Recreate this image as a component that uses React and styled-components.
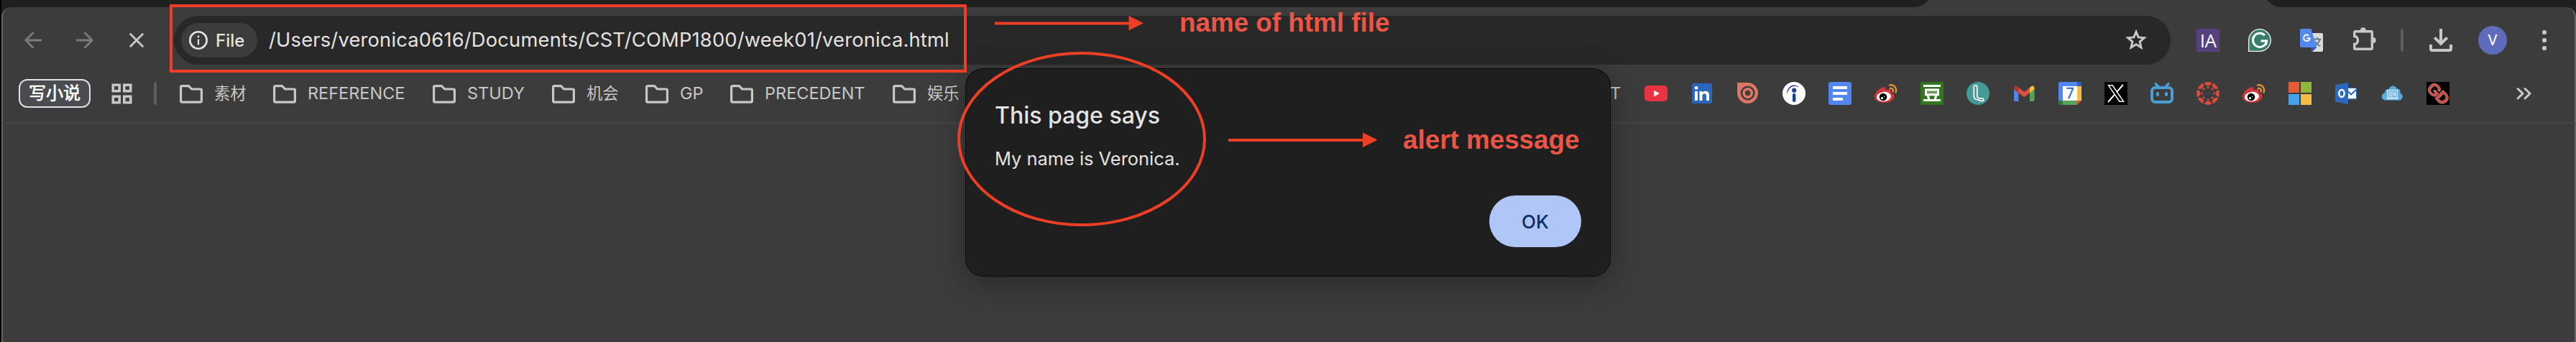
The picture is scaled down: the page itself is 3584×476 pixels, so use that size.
import React from 'react';
import styled, { createGlobalStyle } from 'styled-components';

const ui = `Inter, "Noto Sans CJK SC", sans-serif`;

const GlobalStyle = createGlobalStyle`
  *, *::before, *::after { box-sizing: border-box; }
  body { margin: 0; background: #3c3c3c; font-family: ${ui}; }
  svg { display: block; overflow: visible; flex: none; }
`;

const Window = styled.div`
  position: relative;
  width: 3584px;
  height: 476px;
  display: flex;
  flex-direction: column;
  overflow: hidden;
  background: #3c3c3c;
  border-left: 2px solid #000;
`;

const Chrome = styled.div`
  flex: none;
  background: #1f2120;
`;

const TabStrip = styled.div`
  height: 10px;
  display: flex;
  align-items: flex-end;
  overflow: hidden;
  background: #3c3c3c;
`;

const InactiveTabs = styled.div`
  height: 40px;
  background: #1f2120;
  width: ${(p) => (p.$end ? 'auto' : '2685px')};
  flex: ${(p) => (p.$end ? '1' : 'none')};
  margin-left: ${(p) => (p.$end ? '463px' : '0')};
  border-radius: ${(p) => (p.$end ? '0 0 0 24px' : '0 0 24px 0')};
`;

const Bars = styled.div`
  height: 162px;
  background: #3c3c3c;
  border: solid #666;
  border-width: 0 2px 0 2px;
  border-bottom: 2px solid #464646;
  border-radius: 14px 14px 0 0;
`;

const Page = styled.main`
  flex: 1;
  border: solid #666;
  border-width: 0 2px;
  box-shadow: inset 0 -1px #413b3f;
`;

const NavBar = styled.div`
  height: 92px;
  display: flex;
  align-items: center;
  gap: 36px;
  padding: 0 26px 0 22px;
`;

const NavButtons = styled.div`
  display: flex;
  gap: 32px;
  margin-right: -4px;
`;

const NavButton = styled.span`
  width: 40px;
  height: 40px;
  display: flex;
  align-items: center;
  justify-content: center;
  color: ${(p) => (p.$disabled ? '#7b7b7b' : '#c9c9c9')};
`;

const Omnibox = styled.div`
  flex: 1;
  height: 68px;
  display: flex;
  align-items: center;
  padding: 0 32px 0 10px;
  border-radius: 34px;
  background: #282828;
`;

const FileChip = styled.div`
  width: 106px;
  height: 48px;
  display: flex;
  align-items: center;
  gap: 11px;
  padding-left: 11px;
  border-radius: 24px;
  background: #3c3c3c;
  color: #e3e3e3;
  font-size: 24px;
  font-weight: 500;
`;

const Url = styled.div`
  flex: 1;
  margin-left: 16px;
  color: #e3e3e3;
  font-size: 27.3px;
  letter-spacing: 0.2px;
  line-height: 34px;
  white-space: nowrap;
`;

const Extensions = styled.div`
  display: flex;
  gap: 40px;
`;

const Separator = styled.span`
  width: 4px;
  height: 32px;
  border-radius: 2px;
  background: #5e5e5e;
`;

const IaBadge = styled.span`
  width: 32px;
  height: 32px;
  background: #55417d;
  color: #fff;
  font: 400 26px/33px "Open Sans", sans-serif;
  letter-spacing: -0.5px;
  text-align: center;
`;

const Avatar = styled.span`
  width: 40px;
  height: 40px;
  border-radius: 50%;
  background: #5e6cbb;
  color: #fff;
  font: 400 21px/41px Roboto, sans-serif;
  text-align: center;
`;

const BookmarkBar = styled.div`
  height: 56px;
  display: flex;
  align-items: center;
  padding: 0 61px 0 22px;
`;

const GroupChip = styled.span`
  width: 100px;
  height: 40px;
  border: 2px solid #dfe0e4;
  border-radius: 12px;
  background: #4b4c50;
  color: #fff;
  font-size: 24px;
  font-weight: 400;
  -webkit-text-stroke: 0.7px #fff;
  line-height: 35px;
  text-align: center;
  margin-right: 29px;
`;

const BarDivider = styled(Separator)`
  margin: 0 32px 0 30px;
`;

const Folder = styled.div`
  width: ${(p) => p.$width}px;
  display: flex;
  align-items: center;
  gap: 16px;
  color: #c7c7c7;
  white-space: nowrap;
`;

const Label = styled.span`
  font-size: ${(p) => (p.$cjk ? 22.3 : 23.5)}px;
  line-height: 32px;
  color: #c7c7c7;
`;

const Favicons = styled.div`
  display: flex;
  gap: 32px;
  margin: 0 auto 0 33px;
`;

const HiddenItems = styled.span`
  width: 906px;
`;

const Dialog = styled.section`
  position: absolute;
  left: 1342px;
  top: 96px;
  width: 896px;
  height: 288px;
  display: flex;
  flex-direction: column;
  padding: 45px 40px 40px;
  border-radius: 24px;
  background: #1f1f1f;
  box-shadow: 0 0 0 1px #0b0b0b, 0 10px 44px rgba(0, 0, 0, 0.34);
  color: #e3e3e3;
`;

const DialogTitle = styled.h1`
  margin: 0;
  font-size: 32px;
  font-weight: 500;
  line-height: 40px;
`;

const DialogMessage = styled.p`
  margin: 22px 0 0;
  font-size: 25.4px;
  line-height: 36px;
`;

const OkButton = styled.button`
  align-self: flex-end;
  width: 128px;
  height: 72px;
  margin-top: auto;
  border: 0;
  border-radius: 36px;
  background: #afc6f6;
  color: #0d2c66;
  font: 500 26px/72px ${ui};
`;

const Marks = styled.svg`
  position: absolute;
  left: -2px;
  top: 0;
`;

const Note = styled.span`
  position: absolute;
  left: ${(p) => p.$x}px;
  top: ${(p) => p.$y}px;
  color: #eb5545;
  font: 700 36.8px/42px "Liberation Sans", Arial, sans-serif;
  white-space: nowrap;
`;

const Icon = ({ size = 32, children, ...rest }) => (
  <svg width={size} height={size} viewBox={`0 0 ${size} ${size}`} fill="none" {...rest}>
    {children}
  </svg>
);

const Arrow = ({ flip }) => (
  <Icon size={24} stroke="currentColor" strokeWidth="2.8" transform={flip ? 'scale(-1 1)' : undefined}>
    <path d="M24 12H2M12.5 1.2 1.8 12l10.7 10.8" />
  </Icon>
);

const Close = () => (
  <Icon size={20} stroke="currentColor" strokeWidth="2.8">
    <path d="M.8.8l18.4 18.4M19.2.8.8 19.2" />
  </Icon>
);

const Info = () => (
  <Icon size={26} stroke="#e3e3e3">
    <circle cx="13" cy="13" r="11.7" strokeWidth="2.6" />
    <path d="M13 11.5v8" strokeWidth="2.2" />
    <path d="M13 6.6v2.6" strokeWidth="2.6" />
  </Icon>
);

const Star = () => (
  <Icon stroke="#c7c7c7" strokeWidth="3">
    <path d="M16 4.4l3.2 7.5 8.1.7-6.2 5.4 1.9 8-7-4.3-7 4.3 1.9-8-6.2-5.4 8.1-.7z" />
  </Icon>
);

const Grammarly = () => (
  <Icon>
    <path d="M.7 31.3V16A15.3 15.3 0 1 1 16 31.3z" fill="#377d6c" stroke="#f2f5f4" strokeWidth="1.3" />
    <path d="M23 9.2A9.6 9.6 0 1 0 25.6 17H17.5" stroke="#fff" strokeWidth="3" />
    <path d="M25.2 15.5v7" stroke="#fff" strokeWidth="2" />
  </Icon>
);

const Translate = () => (
  <Icon>
    <path d="M11 6h19a2 2 0 0 1 2 2v22a2 2 0 0 1-2 2H17z" fill="#dcdcdc" />
    <path d="M19 14.5h10.5M24.2 12v2.5M27.7 14.5c-1 4.5-4 7.5-7.2 9.500M21.3 17.5c1.5 3 4 5.500 7 7" stroke="#5f7d88" strokeWidth="1.8" />
    <path d="M15.5 26h7.8L17 32z" fill="#3553b8" />
    <path d="M2 0h13.5l7.8 26H2a2 2 0 0 1-2-2V2a2 2 0 0 1 2-2z" fill="#5488ee" />
    <path d="M12.3 9.6A4.3 4.3 0 1 0 13.7 13.3H9.4" stroke="#fff" strokeWidth="1.9" />
  </Icon>
);

const Puzzle = () => (
  <Icon>
    <path
      d="M5.5 3.7h21.3q1.5 0 1.5 1.5v21.6q0 1.5-1.5 1.5H5.2q-1.5 0-1.5-1.5v-5.3c3 0 4.8-2.4 4.800-5.5s-1.8-5.5-4.8-5.5V5.2q0-1.5 1.8-1.5z"
      stroke="#c7c7c7"
      strokeWidth="3.4"
    />
    <path d="M11.5 2.5a4.3 4.3 0 0 1 8.6 0zM29.5 11.7a4.3 4.3 0 0 1 0 8.6z" fill="#c7c7c7" />
  </Icon>
);

const Download = () => (
  <Icon stroke="#c7c7c7" strokeWidth="4">
    <path d="M16 0v22M7.3 12.3l8.7 8.7 8.7-8.7" />
    <path d="M2 22v6q0 2 2 2h24q2 0 2-2v-6" />
  </Icon>
);

const Dots = () => (
  <Icon fill="#c7c7c7">
    <circle cx="16" cy="5" r="3.1" />
    <circle cx="16" cy="16" r="3.1" />
    <circle cx="16" cy="27" r="3.1" />
  </Icon>
);

const Grid = () => (
  <Icon size={29} stroke="#c7c7c7" strokeWidth="3.6">
    <path d="M2.3 2.3h8.9v8.4H2.3zM17.8 2.3h8.9v8.4h-8.9zM2.3 18.3h8.9v8.4H2.3zM17.8 18.3h8.9v8.4h-8.9z" />
  </Icon>
);

const FolderIcon = () => (
  <Icon stroke="#c7c7c7" strokeWidth="3.2">
    <path d="M3.6 5.6h8.8l4.3 4.4h12q1.7 0 1.7 1.7v14.7q0 1.7-1.7 1.7H3.3q-1.7 0-1.7-1.7V7.3q0-1.7 2-1.7z" />
  </Icon>
);

const YouTube = () => (
  <Icon>
    <rect y="5" width="32" height="22" rx="5" fill="#ea3340" />
    <path d="M13 11.7l8 4.4-8 4.6z" fill="#fff" />
  </Icon>
);

const LinkedIn = () => (
  <Icon>
    <rect x="2" y="2" width="28" height="28" rx="2" fill="#2a66bc" />
    <circle cx="8" cy="8.3" r="2.4" fill="#fff" />
    <path d="M6 13h4v13H6zM12.5 13h4v2c2.2-3.5 9.5-3.3 9.5 3.2V26h-4v-6.8c0-4-5.5-4-5.5 0V26h-4z" fill="#fff" />
  </Icon>
);

const Issuu = () => (
  <Icon>
    <path d="M1 1h14.6A14.5 14.5 0 1 1 1 15.5z" fill="#e07666" />
    <circle cx="15.7" cy="15.5" r="10" fill="#3c3c3c" />
    <circle cx="15.7" cy="15.5" r="7.4" fill="#e07666" />
    <circle cx="15.7" cy="15.5" r="3.7" fill="#3c3c3c" />
  </Icon>
);

const Indeed = () => (
  <Icon>
    <circle cx="16" cy="16" r="16" fill="#fff" />
    <circle cx="16.2" cy="11.7" r="3.1" fill="#1c4092" />
    <rect x="14" y="16" width="4.4" height="12" rx="2" fill="#1c4092" />
    <path d="M6.3 16C7 6 15 1.500 22.5 7 15 3.500 9 7 6.300 16z" fill="#1c4092" stroke="#1c4092" strokeWidth=".4" />
  </Icon>
);

const Docs = () => (
  <Icon>
    <rect width="32" height="32" rx="3" fill="#5187ee" />
    <path d="M6 6h20v4H6zM6 14h20v4H6zM6 22h14v4H6z" fill="#fff" />
  </Icon>
);

const Weibo = () => (
  <Icon>
    <path d="M0 21C0 14 8 7.5 13 7.2c3 0 3 2 2.2 4.3 4-1.5 8-1.5 8 1.5 0 1-.4 1.8-.4 2.2 3 .9 4.6 2.3 4.6 5C27.4 25.5 21 29 14 29S0 26 0 21z" fill="#cf3732" />
    <ellipse cx="13" cy="20.6" rx="10" ry="6.7" transform="rotate(-6 13 20.6)" fill="#fff" />
    <circle cx="12" cy="21" r="5.3" fill="#000" />
    <circle cx="10.5" cy="22.6" r="1.7" fill="#fff" />
    <circle cx="13.7" cy="20.3" r=".8" fill="#fff" />
    <path d="M21 4.5c6-1.3 10.5 4 8.7 10M21.8 9c3-.6 4.8 1.8 4 4.5" stroke="#e39632" strokeWidth="2.3" strokeLinecap="round" />
  </Icon>
);

const Douban = () => (
  <Icon>
    <rect width="32" height="32" rx="1.5" fill="#34761f" />
    <path d="M4 4h24v3H4zM4 24h24v3H4z" fill="#fff" />
    <path d="M7.5 11h17v6.8h-17z" fill="#6b9a5c" stroke="#fff" strokeWidth="3" />
    <path d="M10 18l2 7M22 18l-2 7" stroke="#fff" strokeWidth="3" />
  </Icon>
);

const Lane = () => (
  <Icon>
    <circle cx="16" cy="16" r="16" fill="#459a95" />
    <path
      d="M14.8 18V7c0-3-4.5-3-4.5 0v12.5c0 3.500 2 5 4.500 5.200 2.500.2 4.500 2.300 7 2 2.800-.4 2.400-3.700 0-3.900h-3.500c-2.500 0-3.500-1.300-3.500-3.800z"
      stroke="#fff"
      strokeWidth="1.7"
    />
  </Icon>
);

const Gmail = () => (
  <Icon>
    <path d="M2 10.5l6.3 4.7V27H4q-2 0-2-2z" fill="#5187ee" />
    <path d="M24 15.2l6.5-4.7V25q0 2-2 2H24z" fill="#57a55c" />
    <path d="M24 8l2-1.8c2-1.8 4.5-.2 4.5 2v2.3L24 15.5z" fill="#f2bd42" />
    <path d="M8.3 8v7.4L2 10.5V8.3c0-2.3 2.5-4 4.5-2z" fill="#b8352b" />
    <path d="M8.3 7.7l7.9 6 7.8-6v7.6l-7.8 6-7.9-6z" fill="#d95040" />
  </Icon>
);

const SevenText = styled.text`
  font: 400 20px Roboto, sans-serif;
  fill: #3068ce;
  stroke: #3068ce;
  stroke-width: 0.4px;
`;

const Calendar = () => (
  <Icon>
    <path d="M2 0h24v6H6v20H0V2q0-2 2-2z" fill="#5187ee" />
    <path d="M26 0h4q2 0 2 2v4h-6z" fill="#2b62c6" />
    <path d="M26 6h6v20h-6z" fill="#f2bd42" />
    <path d="M6 26h20v6H6z" fill="#57a55c" />
    <path d="M0 26h6v6H2q-2 0-2-2z" fill="#37793c" />
    <path d="M26 26h6l-6 6z" fill="#d95040" />
    <path d="M6 6h20v20H6z" fill="#fff" />
    <SevenText x="10.5" y="23">7</SevenText>
  </Icon>
);

const XLogo = () => (
  <Icon>
    <rect width="32" height="32" fill="#000" />
    <path d="M5.5 4.8h5.6l15.4 22.4h-5.6z" stroke="#fff" strokeWidth="1.5" />
    <path d="M25.8 4l-9 10.3M14 17.6L5 28" stroke="#fff" strokeWidth="2" />
  </Icon>
);

const Bilibili = () => (
  <Icon stroke="#4b9fd5" strokeLinecap="round">
    <rect x="2" y="8" width="28" height="20" rx="4.5" strokeWidth="4" />
    <path d="M7 2.6l4 3.9M25 2.6l-4 3.9" strokeWidth="3.4" />
    <path d="M10 16v2M22 16v2" strokeWidth="4" />
  </Icon>
);

const octants = [0, 45, 90, 135, 180, 225, 270, 315];

const CanvasLogo = () => (
  <Icon fill="#d94c3c">
    {octants.map((a) => (
      <g key={a} transform={`rotate(${a} 16 16)`}>
        <path d="M11 .9a16 16 0 0 1 10 0 5 4.5 0 0 1-10 0z" />
        <circle cx="16" cy="7.6" r="1.5" />
      </g>
    ))}
  </Icon>
);

const Microsoft = () => (
  <Icon>
    <path d="M0 0h15v15H0z" fill="#e25d34" />
    <path d="M17 0h15v15H17z" fill="#8fb83b" />
    <path d="M0 17h15v15H0z" fill="#48a3ea" />
    <path d="M17 17h15v15H17z" fill="#f6bb42" />
  </Icon>
);

const Outlook = () => (
  <Icon>
    <path d="M18 8.5h12.5v15.3H18z" fill="#fff" stroke="#2a69be" strokeWidth="1" />
    <path d="M18.5 13l4.5 4.5L31 10" stroke="#2a69be" strokeWidth="2" />
    <path d="M1 4.2L19 1v30L1 27.8z" fill="#2a69be" />
    <ellipse cx="10" cy="16" rx="3.7" ry="5" stroke="#fff" strokeWidth="2.5" />
  </Icon>
);

const Cloud = () => (
  <Icon>
    <path
      d="M7.500 25.500c-7 0-7.500-8.800-1-10.500-.5-4.500 3-5.500 5-4.500 2-6 9.500-6 11-1 4-.3 5.500 2.500 4.500 6 5.500 1.500 4.500 10-1.500 10z"
      fill="#5fabdc"
      stroke="#4b8fc0"
      strokeWidth=".5"
    />
    <path d="M9.5 11.5h14v11h-14z" fill="#7fbce4" stroke="#d5eaf7" strokeWidth="1" />
    <path d="M11.5 14.5h4M11.5 17h4.5M11.5 19.500h5M20 18l2 2" stroke="#e2f1fa" strokeWidth="1" />
    <circle cx="19" cy="16.5" r="1.7" stroke="#e2f1fa" />
    <path d="M8.5 22.8h16" stroke="#fff" strokeWidth="1.3" />
  </Icon>
);

const GdText = styled.text`
  font: 700 23px "Liberation Sans", sans-serif;
  letter-spacing: -1px;
  text-anchor: middle;
  fill: #c9403c;
  stroke: #dd8f80;
  stroke-width: 0.8px;
`;

const Gd = () => (
  <Icon>
    <rect width="32" height="32" fill="#000" />
    <GdText x="16" y="24" transform="rotate(45 16 16)">GD</GdText>
  </Icon>
);

const More = () => (
  <Icon size={20} stroke="#c7c7c7" strokeWidth="3" strokeLinecap="round" strokeLinejoin="round">
    <path d="M2 3.5l7 6.7L2 17M12 3.5l7 6.7L12 17" />
  </Icon>
);

const folders = [
  { name: '素材', width: 130, cjk: true },
  { name: 'REFERENCE', width: 222 },
  { name: 'STUDY', width: 166 },
  { name: '机会', width: 130, cjk: true },
  { name: 'GP', width: 118 },
  { name: 'PRECEDENT', width: 226 },
  { name: '娱乐', width: 92, cjk: true },
];

const sites = [
  YouTube, LinkedIn, Issuu, Indeed, Docs, Weibo, Douban, Lane, Gmail, Calendar,
  XLogo, Bilibili, CanvasLogo, Weibo, Microsoft, Outlook, Cloud, Gd,
];

export default function App() {
  return (
    <Window>
      <GlobalStyle />
      <Chrome>
        <TabStrip>
          <InactiveTabs />
          <InactiveTabs $end />
        </TabStrip>
        <Bars>
          <NavBar>
            <NavButtons>
              <NavButton $disabled><Arrow /></NavButton>
              <NavButton $disabled><Arrow flip /></NavButton>
              <NavButton><Close /></NavButton>
            </NavButtons>
            <Omnibox>
              <FileChip><Info />File</FileChip>
              <Url>/Users/veronica0616/Documents/CST/COMP1800/week01/veronica.html</Url>
              <Star />
            </Omnibox>
            <Extensions>
              <IaBadge>IA</IaBadge>
              <Grammarly />
              <Translate />
              <Puzzle />
            </Extensions>
            <Separator />
            <Download />
            <Avatar>V</Avatar>
            <Dots />
          </NavBar>
          <BookmarkBar>
            <GroupChip>写小说</GroupChip>
            <Grid />
            <BarDivider />
            {folders.map((f) => (
              <Folder key={f.name} $width={f.width}>
                <FolderIcon />
                <Label $cjk={f.cjk}>{f.name}</Label>
              </Folder>
            ))}
            <HiddenItems />
            <Label>T</Label>
            <Favicons>
              {sites.map((Site, i) => <Site key={i} />)}
            </Favicons>
            <More />
          </BookmarkBar>
        </Bars>
      </Chrome>
      <Page />
      <Dialog>
        <DialogTitle>This page says</DialogTitle>
        <DialogMessage>My name is Veronica.</DialogMessage>
        <OkButton>OK</OkButton>
      </Dialog>
      <Marks width="3584" height="476" fill="none" stroke="#ec3f25" strokeWidth="4">
        <rect x="238" y="8" width="1105" height="91" />
        <ellipse cx="1505" cy="193.5" rx="171" ry="119.5" />
        <path d="M1384 32.5h188M1709 195h188" />
        <path d="M1570.5 22v20.5l20.5-10.2zM1896 184.5V205l20.5-10.2z" fill="#ec3f25" stroke="none" />
      </Marks>
      <Note $x={1639} $y={11}>name of html file</Note>
      <Note $x={1950} $y={174}>alert message</Note>
    </Window>
  );
}
